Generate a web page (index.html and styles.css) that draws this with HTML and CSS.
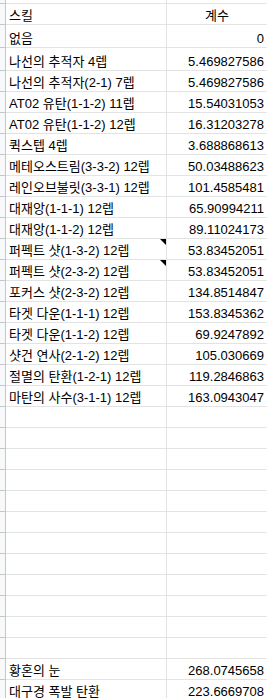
FILE: index.html
```html
<!DOCTYPE html>
<html lang="ko">
<head>
<meta charset="utf-8">
<title>스킬 계수</title>
<link rel="stylesheet" href="styles.css">
</head>
<body>
<div class="sheet">
  <div class="row row-cut"><div class="rh"></div><div class="cell a"></div><div class="cell b"></div></div>
  <div class="row"><div class="rh"></div><div class="cell a">스킬</div><div class="cell b center">계수</div></div>
  <div class="row tall"><div class="rh"></div><div class="cell a">없음</div><div class="cell b num">0</div></div>
  <div class="row tall"><div class="rh"></div><div class="cell a">나선의 추적자 4렙</div><div class="cell b num">5.469827586</div></div>
  <div class="row"><div class="rh"></div><div class="cell a">나선의 추적자(2-1) 7렙</div><div class="cell b num">5.469827586</div></div>
  <div class="row"><div class="rh"></div><div class="cell a">AT02 유탄(1-1-2) 11렙</div><div class="cell b num">15.54031053</div></div>
  <div class="row"><div class="rh"></div><div class="cell a">AT02 유탄(1-1-2) 12렙</div><div class="cell b num">16.31203278</div></div>
  <div class="row"><div class="rh"></div><div class="cell a">퀵스텝 4렙</div><div class="cell b num">3.688868613</div></div>
  <div class="row"><div class="rh"></div><div class="cell a">메테오스트림(3-3-2) 12렙</div><div class="cell b num">50.03488623</div></div>
  <div class="row"><div class="rh"></div><div class="cell a">레인오브불릿(3-3-1) 12렙</div><div class="cell b num">101.4585481</div></div>
  <div class="row"><div class="rh"></div><div class="cell a">대재앙(1-1-1) 12렙</div><div class="cell b num">65.90994211</div></div>
  <div class="row"><div class="rh"></div><div class="cell a">대재앙(1-1-2) 12렙</div><div class="cell b num">89.11024173</div></div>
  <div class="row"><div class="rh"></div><div class="cell a">퍼펙트 샷(1-3-2) 12렙<span class="note"></span></div><div class="cell b num">53.83452051</div></div>
  <div class="row"><div class="rh"></div><div class="cell a">퍼펙트 샷(2-3-2) 12렙<span class="note"></span></div><div class="cell b num">53.83452051</div></div>
  <div class="row"><div class="rh"></div><div class="cell a">포커스 샷(2-3-2) 12렙</div><div class="cell b num">134.8514847</div></div>
  <div class="row"><div class="rh"></div><div class="cell a">타겟 다운(1-1-1) 12렙</div><div class="cell b num">153.8345362</div></div>
  <div class="row"><div class="rh"></div><div class="cell a">타겟 다운(1-1-2) 12렙</div><div class="cell b num">69.9247892</div></div>
  <div class="row"><div class="rh"></div><div class="cell a">샷건 연사(2-1-2) 12렙</div><div class="cell b num">105.030669</div></div>
  <div class="row"><div class="rh"></div><div class="cell a">절멸의 탄환(1-2-1) 12렙</div><div class="cell b num">119.2846863</div></div>
  <div class="row"><div class="rh"></div><div class="cell a">마탄의 사수(3-1-1) 12렙</div><div class="cell b num">163.0943047</div></div>
  <div class="row"><div class="rh"></div><div class="cell a"></div><div class="cell b"></div></div>
  <div class="row"><div class="rh"></div><div class="cell a"></div><div class="cell b"></div></div>
  <div class="row"><div class="rh"></div><div class="cell a"></div><div class="cell b"></div></div>
  <div class="row"><div class="rh"></div><div class="cell a"></div><div class="cell b"></div></div>
  <div class="row"><div class="rh"></div><div class="cell a"></div><div class="cell b"></div></div>
  <div class="row"><div class="rh"></div><div class="cell a"></div><div class="cell b"></div></div>
  <div class="row"><div class="rh"></div><div class="cell a"></div><div class="cell b"></div></div>
  <div class="row"><div class="rh"></div><div class="cell a"></div><div class="cell b"></div></div>
  <div class="row"><div class="rh"></div><div class="cell a"></div><div class="cell b"></div></div>
  <div class="row"><div class="rh"></div><div class="cell a"></div><div class="cell b"></div></div>
  <div class="row"><div class="rh"></div><div class="cell a"></div><div class="cell b"></div></div>
  <div class="row"><div class="rh"></div><div class="cell a"></div><div class="cell b"></div></div>
  <div class="row"><div class="rh"></div><div class="cell a">황혼의 눈</div><div class="cell b num">268.0745658</div></div>
  <div class="row"><div class="rh"></div><div class="cell a">대구경 폭발 탄환</div><div class="cell b num">223.6669708</div></div>
</div>
</body>
</html>
```

FILE: styles.css
```css
html, body {
  margin: 0;
  padding: 0;
  background: #ffffff;
  overflow: hidden;
}

.sheet {
  display: flex;
  flex-direction: column;
  width: 267px;
  font-family: "Liberation Sans", Arial, "Noto Sans CJK KR", sans-serif;
  font-size: 13px;
  color: #000000;
}

.row {
  display: flex;
  height: 21px;
  flex: none;
  box-sizing: border-box;
}

.row.tall {
  height: 23px;
}

.row.row-cut {
  height: 4px;
}

.rh {
  width: 6px;
  flex: none;
  box-sizing: border-box;
  background: #f8f9fa;
  border-right: 1px solid #c4c7c5;
  border-bottom: 1px solid #c4c7c5;
}

.cell {
  box-sizing: border-box;
  display: flex;
  align-items: flex-end;
  border-bottom: 1px solid #e2e3e3;
  line-height: 17px;
  white-space: nowrap;
  overflow: hidden;
  padding: 0 3px;
}

.a {
  position: relative;
  width: 161px;
  flex: none;
  border-right: 1px solid #e2e3e3;
}

.b {
  flex: 1;
  min-width: 0;
}

.center {
  justify-content: center;
}

.num {
  justify-content: flex-end;
  padding-right: 3px;
}

.note {
  position: absolute;
  top: 0;
  right: 0;
  width: 0;
  height: 0;
  border-top: 6px solid #000000;
  border-left: 6px solid transparent;
}
```
